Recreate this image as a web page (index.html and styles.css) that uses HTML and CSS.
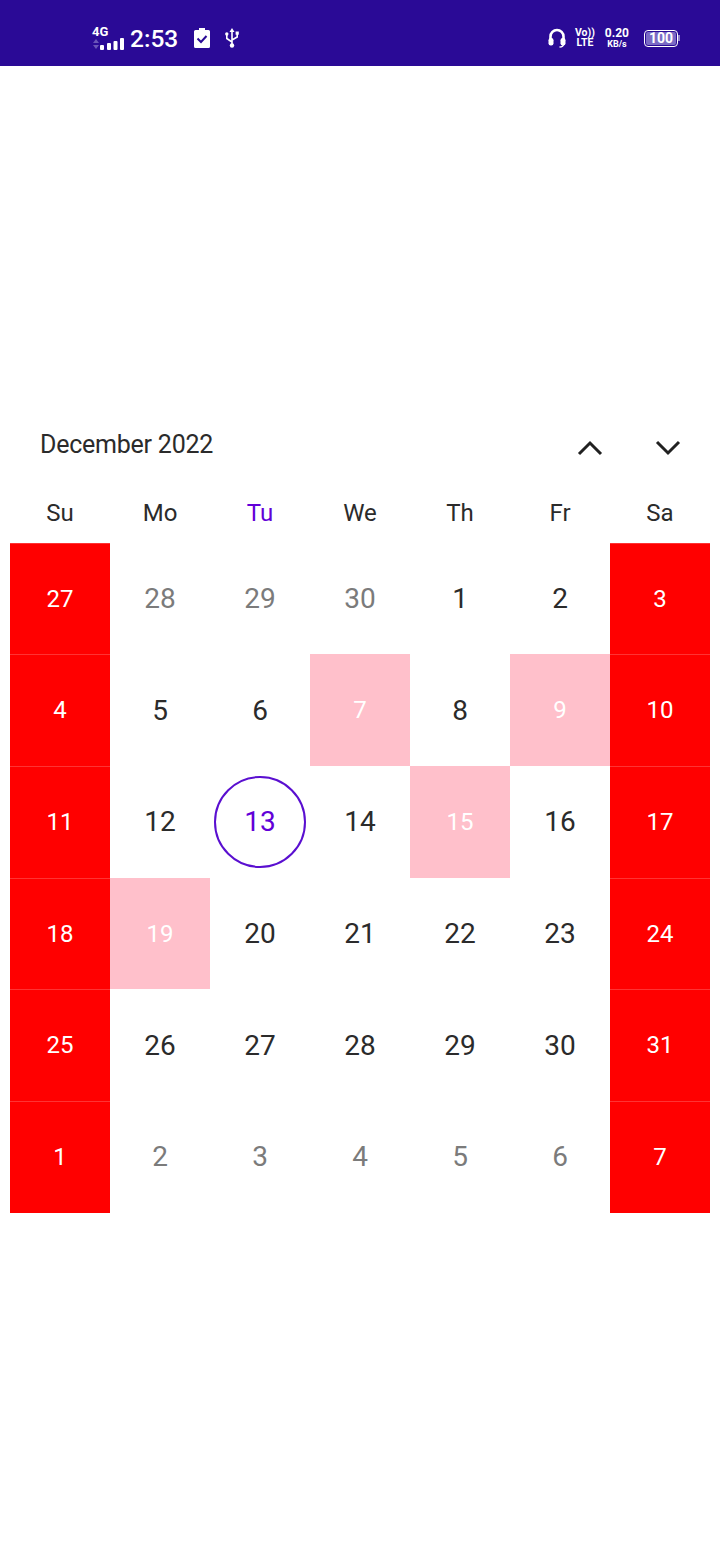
FILE: index.html
```html
<!DOCTYPE html>
<html lang="en">
<head>
    <meta charset="UTF-8">
    <meta name="viewport" content="width=device-width, initial-scale=1.0">
    <title>Calendar</title>
    <link rel="stylesheet" href="styles.css">
</head>
<body>
    <div class="status-bar">
        <div class="status-left">
            <div class="signal">
                <span class="net-label">4G</span>
                <svg class="net-arrows" width="8" height="10" viewBox="0 0 8 10"><path d="M4 0 7 4H1z" fill="#6a55b8"/><path d="M4 10 1 6h6z" fill="#6a55b8"/></svg>
                <svg class="net-bars" width="24" height="12" viewBox="0 0 24 12"><rect x="0" y="7" width="4" height="5" rx="1" fill="#fff"/><rect x="7" y="5" width="4" height="7" rx="1" fill="#fff"/><rect x="13.500" y="3" width="4" height="9" rx="1" fill="#fff"/><rect x="20" y="0" width="4" height="12" rx="1" fill="#fff"/></svg>
            </div>
            <span class="clock">2:53</span>
            <svg class="icon-clip" width="16" height="20" viewBox="0 0 16 20"><path d="M5 0h6v2h3.500a1.500 1.500 0 0 1 1.500 1.500V18.500a1.500 1.500 0 0 1-1.500 1.500H1.500A1.500 1.500 0 0 1 0 18.500V3.500A1.500 1.500 0 0 1 1.500 2H5z" fill="#fff"/><path d="M3.500 10.500 7 14l5.500-6" fill="none" stroke="#2a0a96" stroke-width="2"/></svg>
            <svg class="icon-usb" width="14" height="20" viewBox="0 0 14 20"><path d="M7 0 9.500 4H4.500z" fill="#fff"/><path d="M7 3v15M1.800 7v3.500L7 14M12.200 6v3L7 12" fill="none" stroke="#fff" stroke-width="1.600"/><circle cx="7" cy="17.500" r="2.200" fill="#fff"/><circle cx="1.800" cy="6" r="1.700" fill="#fff"/><rect x="10.600" y="3.500" width="3.200" height="3.200" fill="#fff"/></svg>
        </div>
        <div class="status-right">
            <svg class="icon-phones" width="18" height="20" viewBox="0 0 18 20"><path d="M2.500 12V8.500a6.500 6.500 0 0 1 13 0V12" fill="none" stroke="#fff" stroke-width="2.600"/><rect x="0.500" y="10" width="5" height="7.500" rx="2.200" fill="#fff"/><rect x="12.500" y="10" width="5" height="7.500" rx="2.200" fill="#fff"/><path d="M15.500 16c0 2-1.500 3-4 3" fill="none" stroke="#fff" stroke-width="1.400"/></svg>
            <div class="mini-stack volte"><span>Vo))</span><span>LTE</span></div>
            <div class="mini-stack speed"><span class="speed-num">0.20</span><span>KB/s</span></div>
            <div class="battery">
                <div class="battery-body"><span class="battery-level">100</span></div>
                <div class="battery-tip"></div>
            </div>
        </div>
    </div>

    <div class="calendar">
        <div class="cal-header">
            <span class="cal-title">December 2022</span>
            <div class="cal-nav">
                <svg class="chevron" width="26" height="16" viewBox="0 0 26 16"><path d="M2 14 13 3l11 11" fill="none" stroke="#212121" stroke-width="3"/></svg>
                <svg class="chevron" width="26" height="16" viewBox="0 0 26 16"><path d="M2 2l11 11L24 2" fill="none" stroke="#212121" stroke-width="3"/></svg>
            </div>
        </div>

        <div class="weekdays">
            <span>Su</span>
            <span>Mo</span>
            <span class="today-label">Tu</span>
            <span>We</span>
            <span>Th</span>
            <span>Fr</span>
            <span>Sa</span>
        </div>

        <div class="days">
            <div class="day weekend">27</div>
            <div class="day muted">28</div>
            <div class="day muted">29</div>
            <div class="day muted">30</div>
            <div class="day">1</div>
            <div class="day">2</div>
            <div class="day weekend">3</div>

            <div class="day weekend">4</div>
            <div class="day">5</div>
            <div class="day">6</div>
            <div class="day marked">7</div>
            <div class="day">8</div>
            <div class="day marked">9</div>
            <div class="day weekend">10</div>

            <div class="day weekend">11</div>
            <div class="day">12</div>
            <div class="day today"><span class="today-ring">13</span></div>
            <div class="day">14</div>
            <div class="day marked">15</div>
            <div class="day">16</div>
            <div class="day weekend">17</div>

            <div class="day weekend">18</div>
            <div class="day marked">19</div>
            <div class="day">20</div>
            <div class="day">21</div>
            <div class="day">22</div>
            <div class="day">23</div>
            <div class="day weekend">24</div>

            <div class="day weekend">25</div>
            <div class="day">26</div>
            <div class="day">27</div>
            <div class="day">28</div>
            <div class="day">29</div>
            <div class="day">30</div>
            <div class="day weekend">31</div>

            <div class="day weekend">1</div>
            <div class="day muted">2</div>
            <div class="day muted">3</div>
            <div class="day muted">4</div>
            <div class="day muted">5</div>
            <div class="day muted">6</div>
            <div class="day weekend">7</div>
        </div>
    </div>
</body>
</html>
```

FILE: styles.css
```css
/* base */
body {
    margin: 0;
    height: 1560px;
    overflow: hidden;
    background-color: #fff;
    font-family: Roboto, "Liberation Sans", sans-serif;
    color: #2b2b2b;
}

/* status bar */
.status-bar {
    height: 66px;
    padding: 10px 40px 0 92px;
    box-sizing: border-box;
    display: flex;
    align-items: center;
    justify-content: space-between;
    background-color: #2a0a96;
    color: #fff;
}

.status-left,
.status-right {
    display: flex;
    align-items: center;
}

.signal {
    position: relative;
    width: 32px;
    height: 24px;
}

.net-label {
    position: absolute;
    top: 0;
    left: 0;
    font-size: 13px;
    line-height: 12px;
    font-weight: 700;
}

.net-arrows {
    position: absolute;
    left: 0;
    top: 13px;
}

.net-bars {
    position: absolute;
    left: 8px;
    top: 12px;
}

.clock {
    margin-left: 6px;
    font-size: 24.500px;
    font-weight: 500;
}

.icon-clip {
    margin-left: 16px;
}

.icon-usb {
    margin-left: 15px;
}

.mini-stack {
    display: flex;
    flex-direction: column;
    align-items: center;
    font-weight: 700;
    font-size: 10.500px;
    line-height: 10px;
}

.volte {
    margin-left: 9px;
}

.speed {
    margin-left: 10px;
    font-size: 9px;
}

.speed-num {
    font-size: 12px;
    line-height: 12px;
}

.battery {
    margin-left: 15px;
    display: flex;
    align-items: center;
}

.battery-body {
    width: 34px;
    height: 17px;
    box-sizing: border-box;
    padding: 1px;
    border: 1.500px solid #fff;
    border-radius: 4px;
}

.battery-level {
    display: block;
    height: 100%;
    border-radius: 2px;
    background-color: #7a6ac4;
    font-size: 14px;
    line-height: 12px;
    font-weight: 700;
    text-align: center;
}

.battery-tip {
    width: 2px;
    height: 6px;
    background-color: #8f80cc;
}

/* calendar */
.calendar {
    padding: 358px 10px 0;
}

.cal-header {
    height: 40px;
    padding: 0 29px 0 30px;
    display: flex;
    align-items: center;
    justify-content: space-between;
}

.cal-title {
    font-size: 25px;
    letter-spacing: -0.230px;
}

.cal-nav {
    display: flex;
    gap: 52px;
    padding-top: 8px;
}

.weekdays {
    height: 78.800px;
    padding-top: 20px;
    box-sizing: border-box;
    display: grid;
    grid-template-columns: repeat(7, 100px);
    align-items: center;
    font-size: 24px;
    text-align: center;
}

.today-label {
    color: #6200d8;
}

.days {
    height: 670px;
    display: grid;
    grid-template-columns: repeat(7, 100px);
    grid-template-rows: repeat(6, 1fr);
}

.day {
    display: flex;
    align-items: center;
    justify-content: center;
    font-size: 28px;
    color: #2b2b2b;
}

.muted {
    color: #7b7b7b;
}

.weekend {
    background-color: #ff0000;
    box-shadow: inset 0 1px 0 rgba(255, 255, 255, 0.2);
    color: #fff;
    font-size: 24px;
}

.marked {
    background-color: #ffc0cb;
    color: #fff;
    font-size: 24px;
}

.today-ring {
    width: 92px;
    height: 92px;
    box-sizing: border-box;
    display: flex;
    align-items: center;
    justify-content: center;
    border: 2px solid #5a0fd0;
    border-radius: 50%;
    color: #6200d8;
}
```
